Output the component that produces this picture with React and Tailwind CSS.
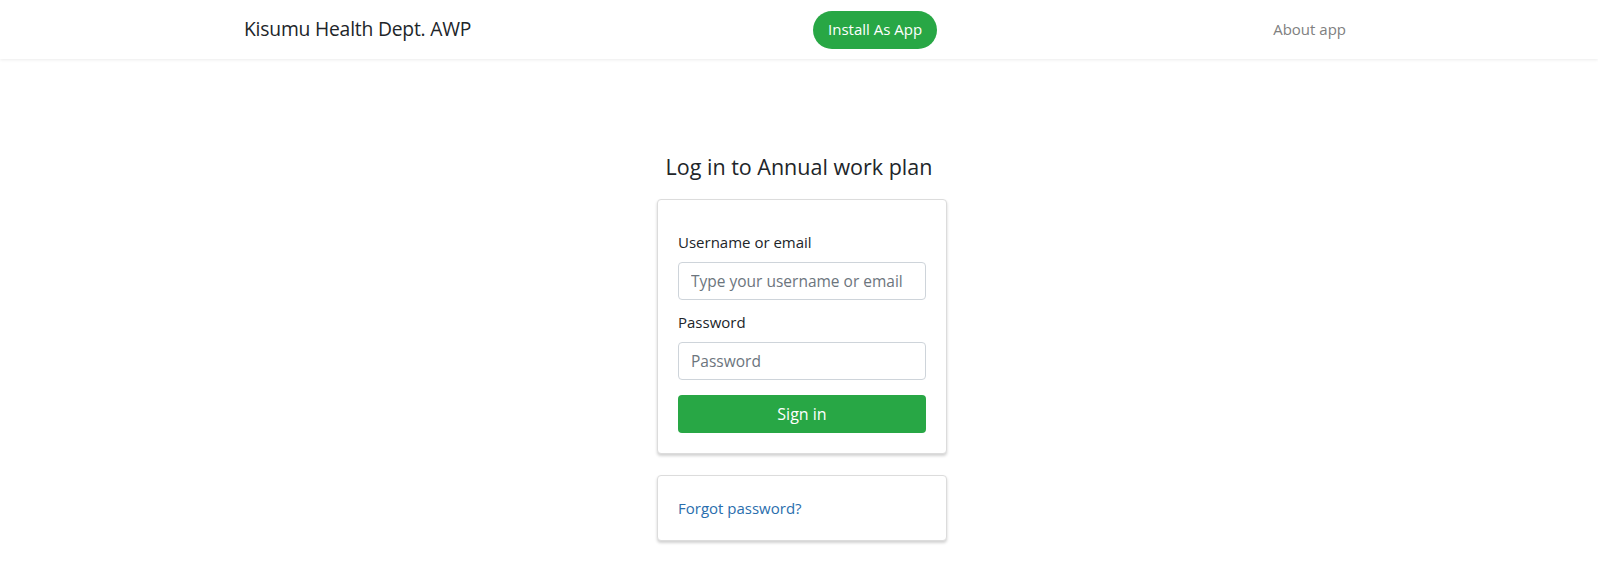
import React from "react";

const font = { fontFamily: '"Open Sans", "Noto Sans", sans-serif' };

function Navbar() {
  return (
    <nav className="h-[59px] bg-white shadow-[0_1px_3px_rgba(0,0,0,0.08)] relative z-10">
      <div className="mx-auto w-[1140px] px-[15px] h-full flex items-center">
        <div className="w-[569px]">
          <a className="text-[19.3px] text-[#212529] tracking-[-0.2px]">Kisumu Health Dept. AWP</a>
        </div>
        <button className="h-[38px] px-[15px] rounded-full bg-[#28a745] text-white text-[15px]">
          Install As App
        </button>
        <a className="ml-auto px-2 text-[15px] text-[#808080]">About app</a>
      </div>
    </nav>
  );
}

function Field({ label, placeholder, type }) {
  return (
    <div>
      <label className="block text-[15px] leading-6 text-[#212529] mb-2">{label}</label>
      <input
        type={type}
        placeholder={placeholder}
        className="block w-full h-[38px] px-3 rounded-[4px] border border-[#ced4da] text-[15.5px] text-[#495057] placeholder:text-[#6c757d] outline-none"
      />
    </div>
  );
}

export default function App() {
  return (
    <div className="min-h-screen bg-white" style={font}>
      <Navbar />
      <main className="flex flex-col items-center pt-[93px]">
        <h4 className="text-[21.5px] leading-[29px] text-[#212529]">Log in to Annual work plan</h4>
        <div className="mt-[18px] ml-[6px] w-[290px] bg-white border border-[#dcdcdc] rounded-[4px] shadow-[0_2px_3px_rgba(0,0,0,0.18)] px-5 pt-[30px] pb-5">
          <div className="flex flex-col gap-[10px]">
            <Field label="Username or email" placeholder="Type your username or email" type="text" />
            <Field label="Password" placeholder="Password" type="password" />
          </div>
          <button className="mt-[15px] w-full h-[38px] rounded-[4px] bg-[#28a745] text-white text-[16px]">
            Sign in
          </button>
        </div>
        <div className="mt-[21px] ml-[6px] w-[290px] bg-white border border-[#dcdcdc] rounded-[4px] shadow-[0_2px_3px_rgba(0,0,0,0.18)] p-5">
          <a className="text-[15px] leading-6 text-[#2a6ead]">Forgot password?</a>
        </div>
      </main>
    </div>
  );
}
